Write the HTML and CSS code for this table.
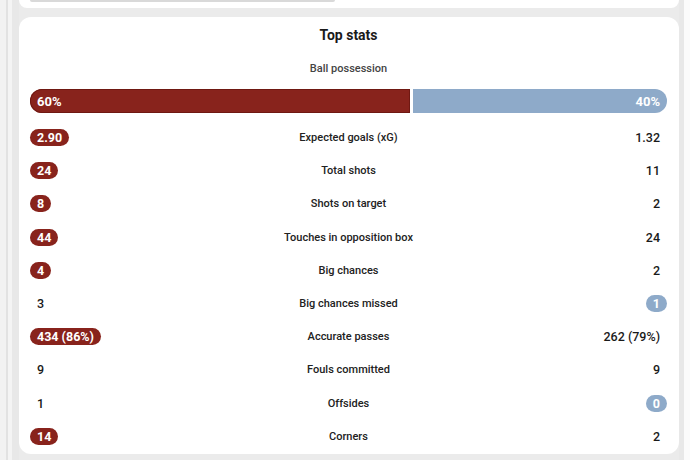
FILE: index.html
```html
<!DOCTYPE html>
<html lang="en">
<head>
<meta charset="utf-8">
<title>Top stats</title>
<link rel="stylesheet" href="styles.css">
</head>
<body>
<div class="page">
  <div class="gutter-left"></div>
  <main class="column">
    <div class="prev-card"><div class="prev-bar"></div></div>
    <section class="card">
      <h2 class="title">Top stats</h2>
      <div class="poss-label">Ball possession</div>
      <div class="poss-bar">
        <div class="poss home" style="width: calc(60% - 2px)">60%</div>
        <div class="poss away">40%</div>
      </div>
      <div class="rows">
        <div class="row"><span class="val home-hi">2.90</span><span class="label">Expected goals (xG)</span><span class="val">1.32</span></div>
        <div class="row"><span class="val home-hi">24</span><span class="label">Total shots</span><span class="val">11</span></div>
        <div class="row"><span class="val home-hi">8</span><span class="label">Shots on target</span><span class="val">2</span></div>
        <div class="row"><span class="val home-hi">44</span><span class="label">Touches in opposition box</span><span class="val">24</span></div>
        <div class="row"><span class="val home-hi">4</span><span class="label">Big chances</span><span class="val">2</span></div>
        <div class="row"><span class="val">3</span><span class="label">Big chances missed</span><span class="val away-hi">1</span></div>
        <div class="row"><span class="val home-hi">434 (86%)</span><span class="label">Accurate passes</span><span class="val">262 (79%)</span></div>
        <div class="row"><span class="val">9</span><span class="label">Fouls committed</span><span class="val">9</span></div>
        <div class="row"><span class="val">1</span><span class="label">Offsides</span><span class="val away-hi">0</span></div>
        <div class="row"><span class="val home-hi">14</span><span class="label">Corners</span><span class="val">2</span></div>
      </div>
    </section>
  </main>
  <div class="gutter-right"></div>
</div>
</body>
</html>
```

FILE: styles.css
```css
* { box-sizing: border-box; }
html, body {
  margin: 0;
  padding: 0;
  background: #ebebeb;
  font-family: Roboto, Inter, "Noto Sans", sans-serif;
  color: #1a1a1a;
}
.page {
  display: flex;
  width: 690px;
  height: 460px;
  overflow: hidden;
}
.gutter-left {
  width: 19px;
  flex: none;
  background: linear-gradient(to right, #f2f2f2 0, #f2f2f2 6px, #e2e2e2 6px, #e2e2e2 8px, #f4f4f4 8px, #f4f4f4 12px, #e8e8e8 12px);
}
.gutter-right {
  width: 11px;
  flex: none;
  background: linear-gradient(to right, #e8e8e8 0, #e8e8e8 5px, #fbfbfb 5px);
}
.column {
  width: 660px;
  flex: none;
  display: flex;
  flex-direction: column;
}
.prev-card {
  height: 8px;
  background: #fff;
  border-radius: 0 0 12px 12px;
  padding-left: 11px;
}
.prev-bar {
  width: 305px;
  height: 2px;
  background: #d9d9d9;
  border-radius: 0 0 2px 2px;
}
.card {
  margin-top: 9px;
  height: 437px;
  background: #fff;
  border-radius: 12px;
  padding: 10px 12px 0 11px;
  display: flex;
  flex-direction: column;
}
.title {
  margin: 0;
  font-size: 14px;
  line-height: 16px;
  font-weight: 700;
  text-align: center;
  color: #1a1a1a;
}
.poss-label {
  margin-top: 19px;
  font-size: 11px;
  line-height: 14px;
  font-weight: 500;
  text-align: center;
  color: #444;
}
.poss-bar {
  margin-top: 13px;
  height: 24px;
  display: flex;
  gap: 3px;
}
.poss {
  display: flex;
  align-items: center;
  color: #fff;
  font-size: 13px;
  font-weight: 700;
  padding: 0 7px;
}
.poss.home {
  flex: none;
  background: #88231c;
  box-shadow: inset 0 0 0 1px #6f1812;
  border-radius: 12px 0 0 12px;
}
.poss.away {
  flex: 1;
  background: #8eaac9;
  justify-content: flex-end;
  border-radius: 0 12px 12px 0;
}
.rows {
  margin-top: 8px;
  display: flex;
  flex-direction: column;
}
.row {
  height: 33.2px;
  display: grid;
  grid-template-columns: 1fr auto 1fr;
  align-items: center;
}
.row .val:first-child { justify-self: start; }
.row .val:last-child { justify-self: end; }
.label {
  font-size: 11px;
  font-weight: 500;
  color: #222;
  text-align: center;
}
.val {
  height: 17px;
  line-height: 17px;
  padding: 0 7px;
  border-radius: 9px;
  font-size: 12.5px;
  font-weight: 500;
  color: #1a1a1a;
  white-space: nowrap;
}
.val.home-hi {
  background: #88231c;
  color: #fff;
  font-weight: 700;
}
.val.away-hi {
  background: #8eaac9;
  color: #fff;
  font-weight: 700;
}
```
